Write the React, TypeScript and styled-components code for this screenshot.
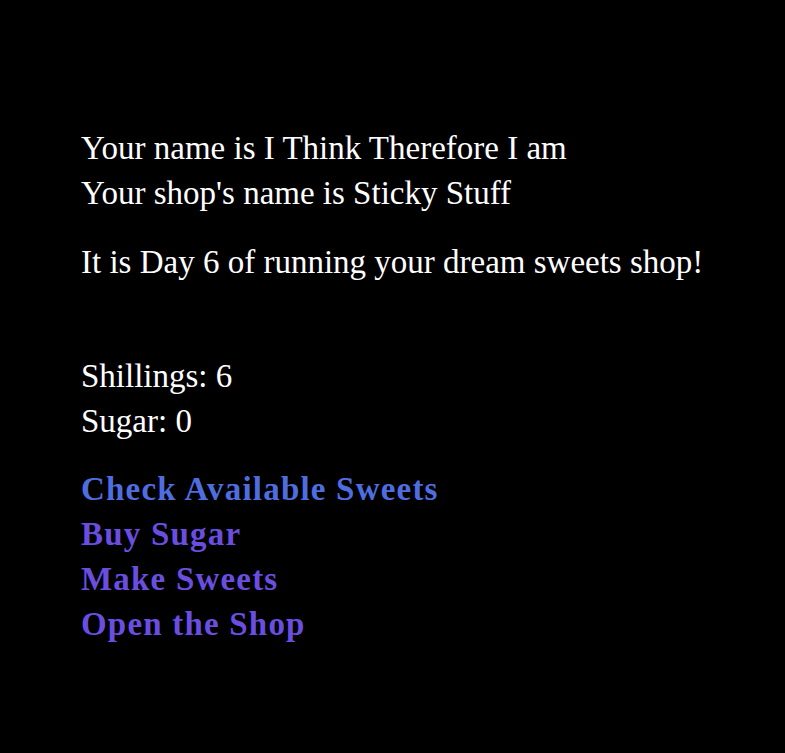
import styled, { createGlobalStyle } from 'styled-components';

const GlobalStyle = createGlobalStyle`
  html, body {
    margin: 0;
    background: #000;
  }
`;

const Page = styled.div`
  min-height: 753px;
  background: #000;
  padding: 126px 0 0 81px;
  box-sizing: border-box;
  font-family: 'Liberation Serif', Georgia, serif;
  font-size: 33px;
  line-height: 45px;
  color: #fff;
`;

const Block = styled.div<{ gap?: number }>`
  display: flex;
  flex-direction: column;
  align-items: flex-start;
  margin-bottom: ${props => props.gap ?? 0}px;
`;

const Line = styled.div``;

const ActionLink = styled.a<{ visited?: boolean }>`
  font-weight: bold;
  letter-spacing: 1.2px;
  text-decoration: none;
  color: ${props => (props.visited ? '#6a4ee0' : '#4e6ee0')};
  cursor: pointer;
`;

const App = () => {
  return (
    <>
      <GlobalStyle />
      <Page>
        <Block gap={24}>
          <Line>Your name is I Think Therefore I am</Line>
          <Line>Your shop's name is Sticky Stuff</Line>
        </Block>
        <Block gap={69}>
          <Line>It is Day 6 of running your dream sweets shop!</Line>
        </Block>
        <Block gap={23}>
          <Line>Shillings: 6</Line>
          <Line>Sugar: 0</Line>
        </Block>
        <Block>
          <ActionLink>Check Available Sweets</ActionLink>
          <ActionLink visited>Buy Sugar</ActionLink>
          <ActionLink visited>Make Sweets</ActionLink>
          <ActionLink visited>Open the Shop</ActionLink>
        </Block>
      </Page>
    </>
  );
};

export default App;
